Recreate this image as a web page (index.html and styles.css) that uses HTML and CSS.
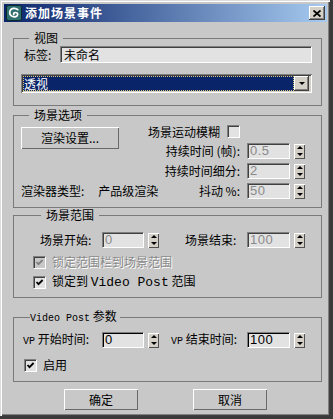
FILE: index.html
```html
<!DOCTYPE html>
<html lang="zh-CN">
<head>
  <meta charset="UTF-8">
  <title>添加场景事件</title>
  <link rel="stylesheet" href="styles.css">
</head>
<body>

<div class="window">
  <!-- Pasek tytułu -->
  <div class="titlebar">
    <svg class="app-icon" width="16" height="16" viewBox="0 0 16 16">
      <rect x="0.5" y="0.5" width="15" height="15" rx="2" fill="#2f6f6d" stroke="#0c2b2b"/>
      <path d="M11.8 4.6 C9.6 2.6 4.6 2.8 3.8 6.6 C3.1 10.4 6.6 12.6 9.8 11.6 C12.4 10.8 12.2 7.6 9.6 7.5 C8.1 7.4 7.2 8.6 7.8 9.6" fill="none" stroke="#fff" stroke-width="1.7" stroke-linecap="round"/>
    </svg>
    <span class="title">添加场景事件</span>
    <span class="close-btn">
      <svg width="8" height="7" viewBox="0 0 8 7"><path d="M0.5 0.5 L7.5 6.5 M7.5 0.5 L0.5 6.5" stroke="#000" stroke-width="1.8"/></svg>
    </span>
  </div>

  <div class="content">
    <!-- Widok -->
    <fieldset class="group group-view">
      <legend>视图</legend>
      <div class="label-row">
        <span class="label-name">标签:</span>
        <div class="textbox">未命名</div>
      </div>
      <div class="combo">
        <div class="combo-value">透视</div>
        <div class="combo-arrow"><span class="tri-down"></span></div>
      </div>
    </fieldset>

    <!-- Opcje sceny -->
    <fieldset class="group group-scene">
      <legend>场景选项</legend>
      <div class="scene-grid">
        <div class="btn btn-render">渲染设置...</div>
        <div class="row-label r1">场景运动模糊 <span class="checkbox"></span></div>
        <div class="row-label r2">持续时间 (帧):</div>
        <div class="spinner r2">
          <div class="num disabled">0.5</div>
          <div class="arrows"><span class="tri-up"></span><span class="tri-down"></span></div>
        </div>
        <div class="row-label r3">持续时间细分:</div>
        <div class="spinner r3">
          <div class="num disabled">2</div>
          <div class="arrows"><span class="tri-up"></span><span class="tri-down"></span></div>
        </div>
        <div class="renderer r4"><span>渲染器类型:</span><span>产品级渲染</span></div>
        <div class="row-label r4">抖动 %:</div>
        <div class="spinner r4">
          <div class="num disabled">50</div>
          <div class="arrows"><span class="tri-up"></span><span class="tri-down"></span></div>
        </div>
      </div>
    </fieldset>

    <!-- Zakres sceny -->
    <fieldset class="group group-range">
      <legend>场景范围</legend>
      <div class="range-row">
        <span class="lbl-a">场景开始:</span>
        <div class="spinner short">
          <div class="num disabled">0</div>
          <div class="arrows"><span class="tri-up"></span><span class="tri-down"></span></div>
        </div>
        <span class="lbl-b">场景结束:</span>
        <div class="spinner">
          <div class="num disabled">100</div>
          <div class="arrows"><span class="tri-up"></span><span class="tri-down"></span></div>
        </div>
      </div>
      <div class="check-row">
        <span class="checkbox checked off">
          <svg width="9" height="9" viewBox="0 0 9 9"><path d="M1.5 4 L3.5 6.2 L7.6 2" fill="none" stroke="#808080" stroke-width="1.8"/></svg>
        </span>
        <span class="disabled-text">锁定范围栏到场景范围</span>
      </div>
      <div class="check-row">
        <span class="checkbox checked">
          <svg width="9" height="9" viewBox="0 0 9 9"><path d="M1.5 4 L3.5 6.2 L7.6 2" fill="none" stroke="#000" stroke-width="1.8"/></svg>
        </span>
        <span>锁定到 <span class="mono">Video Post</span> 范围</span>
      </div>
    </fieldset>

    <!-- Parametry Video Post -->
    <fieldset class="group group-vp">
      <legend><span class="mono small">Video Post</span> 参数</legend>
      <div class="range-row">
        <span class="lbl-a"><span class="mono small">VP</span> 开始时间:</span>
        <div class="spinner short">
          <div class="num">0</div>
          <div class="arrows"><span class="tri-up"></span><span class="tri-down"></span></div>
        </div>
        <span class="lbl-b"><span class="mono small">VP</span> 结束时间:</span>
        <div class="spinner">
          <div class="num">100</div>
          <div class="arrows"><span class="tri-up"></span><span class="tri-down"></span></div>
        </div>
      </div>
      <div class="check-row">
        <span class="checkbox checked">
          <svg width="9" height="9" viewBox="0 0 9 9"><path d="M1.5 4 L3.5 6.2 L7.6 2" fill="none" stroke="#000" stroke-width="1.8"/></svg>
        </span>
        <span>启用</span>
      </div>
    </fieldset>

    <div class="buttons">
      <div class="btn">确定</div>
      <div class="btn">取消</div>
    </div>
  </div>
</div>

</body>
</html>
```

FILE: styles.css
```css
* {
  box-sizing: border-box;
}
body {
  margin: 0;
  background: #3a3a3a;
  font-family: "Noto Sans CJK SC", "Liberation Sans", sans-serif;
  font-size: 12px;
  line-height: 14px;
  color: #000;
}
.window {
  width: 330px;
  height: 416px;
  padding: 4px 3px 0 4px;
  background: #c8c8c8;
  box-shadow: inset 1px 1px #dcdcdc, inset 2px 2px #fff, inset -1px -1px #404040, inset -2px -2px #808080;
}
.titlebar {
  display: flex;
  align-items: center;
  height: 18px;
  background: linear-gradient(to right, #0a246a, #a6caf0);
}
.app-icon {
  margin-left: 2px;
}
.title {
  margin-left: 3px;
  color: #fff;
  font-weight: bold;
  font-size: 12px;
  letter-spacing: 1px;
}
.close-btn {
  margin-left: auto;
  margin-right: 2px;
  width: 16px;
  height: 14px;
  display: flex;
  align-items: center;
  justify-content: center;
  background: #d4d0c8;
  box-shadow: inset -1px -1px #404040, inset 1px 1px #fff, inset -2px -2px #808080;
}
.content {
  padding: 9px 0 0 9px;
}

/* ramki grup */
.group {
  width: 309px;
  margin: 0;
  padding: 0;
  min-width: 0;
  border: 1px solid #7a7a7a;
}
.group legend {
  margin-left: 8px;
  padding: 0 5px;
  line-height: 14px;
}
.group-vp legend {
  margin-left: 7px;
  padding: 0 3px 0 0;
}
.mono {
  font-family: "Liberation Mono", "DejaVu Sans Mono", monospace;
  font-size: 13px;
}
.mono.small {
  font-size: 10px;
}

/* widok */
.group-view {
  padding: 1px 9px 12px 7px;
}
.label-row {
  display: flex;
  align-items: center;
  padding-left: 3px;
}
.label-name {
  width: 36px;
}
.textbox {
  flex: 1;
  height: 17px;
  padding: 1px 3px;
  line-height: 14px;
  background: #e2e2e2;
  border-top: 1px solid #808080;
  border-left: 1px solid #808080;
  border-bottom: 1px solid #fff;
  border-right: 1px solid #fff;
  box-shadow: inset 1px 1px #404040;
}
.combo {
  display: flex;
  margin-top: 11px;
  height: 19px;
  padding: 2px 3px 2px 2px;
  background: #d4d0c8;
  box-shadow: inset 1px 1px #808080, inset -1px -1px #fff, inset 2px 2px #404040;
}
.combo-value {
  flex: 1;
  padding-left: 1px;
  color: #fff;
  line-height: 15px;
  background: #0a246a;
  outline: 1px dotted #d8c878;
  outline-offset: -1px;
}
.combo-arrow {
  width: 15px;
  display: flex;
  align-items: center;
  justify-content: center;
  background: #d4d0c8;
  box-shadow: inset -1px -1px #404040, inset 1px 1px #fff, inset -2px -2px #808080;
}
.tri-down {
  width: 0;
  height: 0;
  border-left: 3px solid transparent;
  border-right: 3px solid transparent;
  border-top: 3px solid #000;
}
.tri-up {
  width: 0;
  height: 0;
  border-left: 3px solid transparent;
  border-right: 3px solid transparent;
  border-bottom: 3px solid #000;
}

/* opcje sceny */
.group-scene {
  margin-top: 2px;
  padding: 0 16px 6px 7px;
}
.scene-grid {
  display: grid;
  grid-template-columns: 1fr auto 58px;
  grid-template-rows: 19px 20px 20px 20px;
  column-gap: 7px;
  align-items: center;
}
.r1 { grid-row: 1; }
.r2 { grid-row: 2; }
.r3 { grid-row: 3; }
.r4 { grid-row: 4; }
.row-label {
  grid-column: 2;
  text-align: right;
  white-space: nowrap;
  display: flex;
  align-items: center;
  justify-content: flex-end;
  gap: 7px;
}
.spinner.r2, .spinner.r3, .spinner.r4 {
  grid-column: 3;
}
.btn-render {
  grid-column: 1;
  grid-row: 1 / 3;
  align-self: start;
  margin-top: 5px;
  width: 98px;
}
.renderer {
  grid-column: 1;
  display: flex;
  gap: 14px;
  white-space: nowrap;
  min-width: 0;
}

.btn {
  height: 22px;
  display: flex;
  align-items: center;
  justify-content: center;
  background: #c8c8c8;
  box-shadow: inset 1px 1px #fff, inset -1px -1px #6a6a6a;
}

/* pola liczbowe */
.spinner {
  display: flex;
  align-items: center;
  width: 58px;
  height: 16px;
}
.spinner.short {
  width: 57px;
}
.num {
  flex: 1;
  height: 16px;
  margin-right: 4px;
  padding: 0 2px;
  font-family: "Liberation Sans", sans-serif;
  font-size: 13px;
  line-height: 14px;
  letter-spacing: 0.5px;
  background: #e2e2e2;
  border-top: 1px solid #808080;
  border-left: 1px solid #808080;
  border-bottom: 1px solid #fff;
  border-right: 1px solid #fff;
  box-shadow: inset 1px 1px #000;
}
.num.disabled {
  color: #8a8a8a;
  box-shadow: inset 1px 1px #404040;
}
.arrows {
  width: 11px;
  height: 15px;
  display: flex;
  flex-direction: column;
  align-items: center;
  justify-content: space-around;
  background: #d4d0c8;
  box-shadow: inset 1px 1px #fff, inset -1px -1px #505050;
}

.checkbox {
  width: 13px;
  height: 13px;
  display: inline-flex;
  align-items: center;
  justify-content: center;
  background: #e2e2e2;
  border-top: 1px solid #808080;
  border-left: 1px solid #808080;
  border-bottom: 1px solid #fff;
  border-right: 1px solid #fff;
  box-shadow: inset 1px 1px #404040;
}
.checkbox.off {
  background: #c8c8c8;
}

/* zakres sceny */
.group-range {
  padding: 0 0 5px 19px;
}
.range-row {
  display: flex;
  align-items: center;
  height: 16px;
  margin-top: 10px;
  padding-left: 7px;
}
.range-row .lbl-a {
  width: 62px;
}
.range-row .lbl-b {
  width: 62px;
  margin-left: 26px;
}
.check-row {
  display: flex;
  align-items: center;
  gap: 6px;
  height: 20px;
}
.group-range .check-row:nth-of-type(2) {
  margin-top: 4px;
}
.disabled-text {
  color: #8a8a8a;
  text-shadow: 1px 1px #fff;
}

/* Video Post */
.group-vp {
  margin-top: 11px;
  padding: 0 0 6px 9px;
}
.group-vp .range-row {
  margin-top: 6px;
  padding-left: 0;
}
.group-vp .range-row .lbl-a {
  width: 79px;
}
.group-vp .range-row .lbl-b {
  width: 76px;
  margin-left: 12px;
}
.group-vp .check-row {
  margin-top: 7px;
  padding-left: 1px;
}

.buttons {
  display: flex;
  gap: 55px;
  margin-top: 7px;
  padding-left: 51px;
}
.buttons .btn {
  width: 74px;
  height: 21px;
}
```
